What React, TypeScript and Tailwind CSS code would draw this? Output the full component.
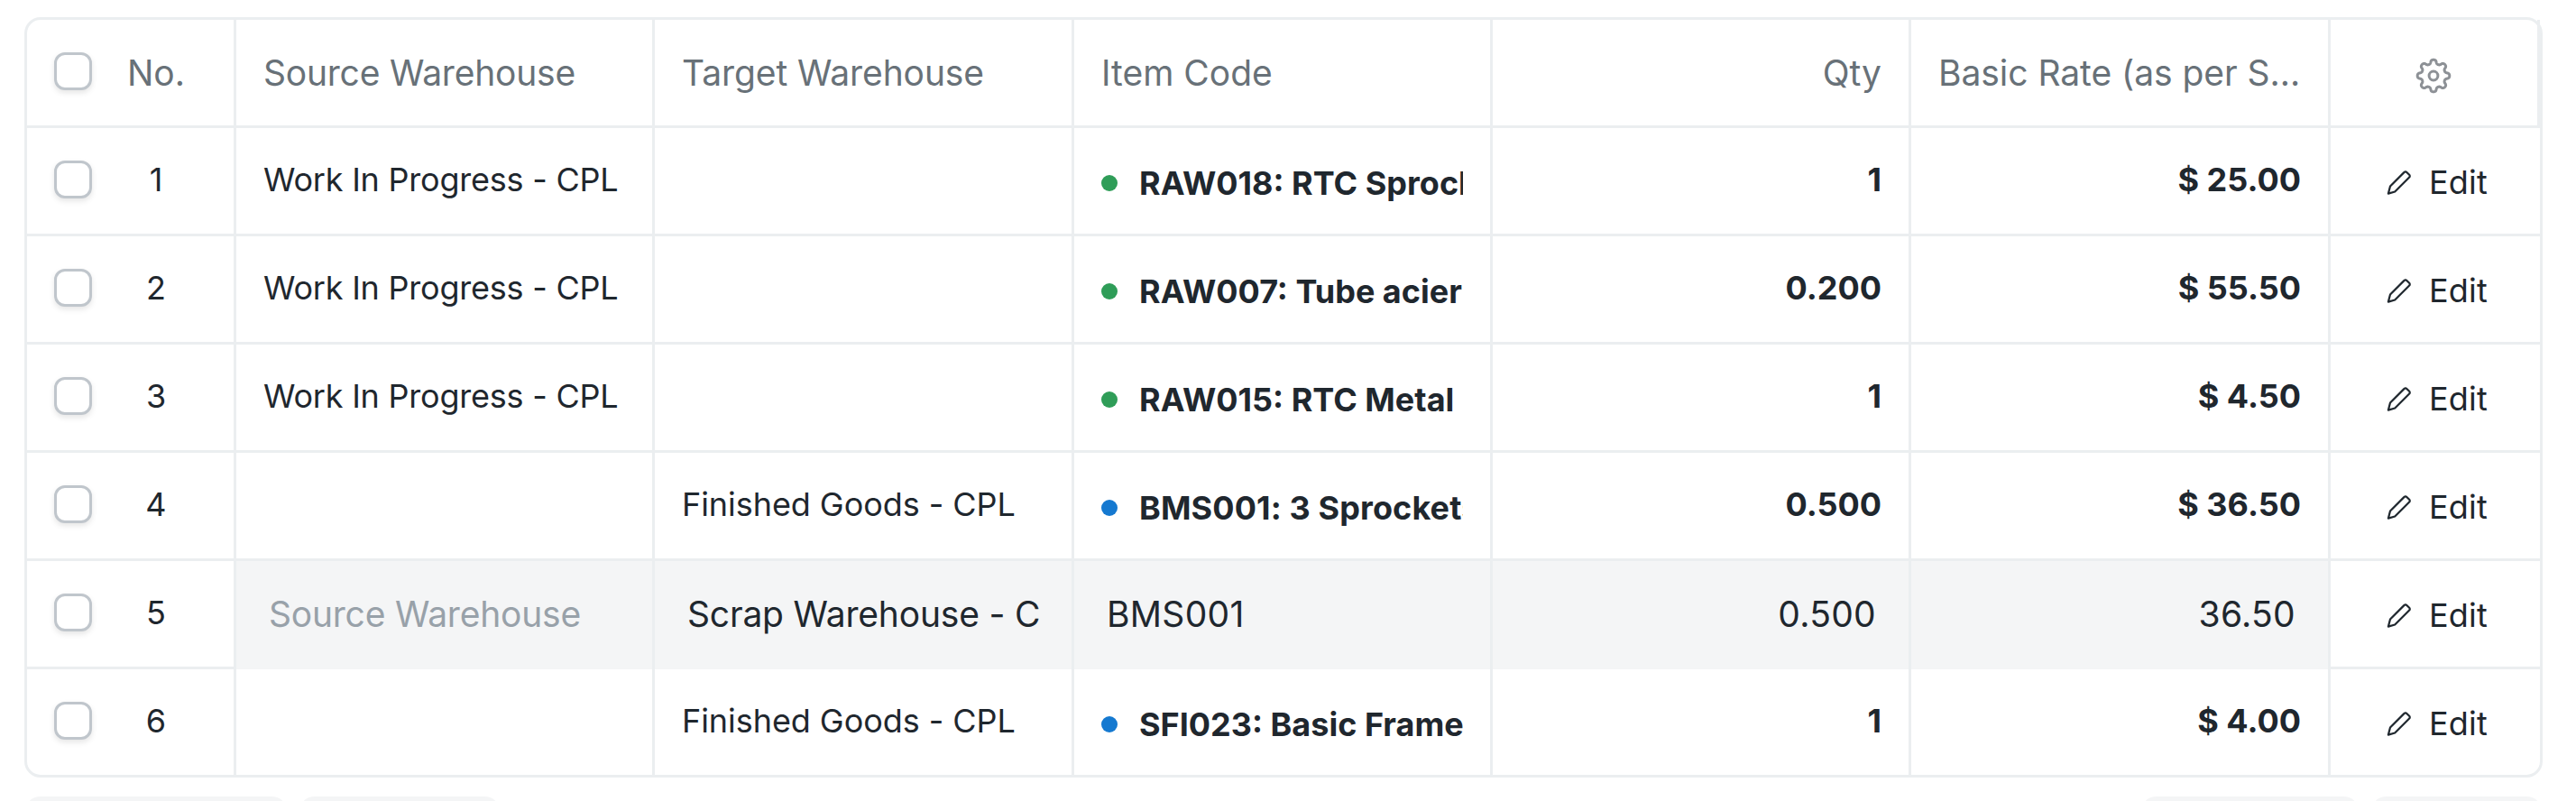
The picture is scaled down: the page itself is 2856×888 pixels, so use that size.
import React from "react";
import clsx from "clsx";

interface StockRow {
	idx: number;
	source: string;
	target: string;
	item: string;
	color: "green" | "blue";
	qty: string;
	rate: string;
	editing?: boolean;
}

const rows: StockRow[] = [
	{ idx: 1, source: "Work In Progress - CPL", target: "", item: "RAW018: RTC Sprocket", color: "green", qty: "1", rate: "$ 25.00" },
	{ idx: 2, source: "Work In Progress - CPL", target: "", item: "RAW007: Tube acier", color: "green", qty: "0.200", rate: "$ 55.50" },
	{ idx: 3, source: "Work In Progress - CPL", target: "", item: "RAW015: RTC Metal", color: "green", qty: "1", rate: "$ 4.50" },
	{ idx: 4, source: "", target: "Finished Goods - CPL", item: "BMS001: 3 Sprockets", color: "blue", qty: "0.500", rate: "$ 36.50" },
	{ idx: 5, source: "", target: "Scrap Warehouse - C", item: "BMS001", color: "blue", qty: "0.500", rate: "36.50", editing: true },
	{ idx: 6, source: "", target: "Finished Goods - CPL", item: "SFI023: Basic Frame", color: "blue", qty: "1", rate: "$ 4.00" },
];

const Checkbox = () => (
	<div className="size-[42px] shrink-0 rounded-[12px] border-[3px] border-[#c0c6cc] bg-white shadow-[0_3px_6px_rgba(0,0,0,0.1)]" />
);

const GearIcon = () => {
	// eight round teeth, sampled around the circle
	const points = Array.from({ length: 192 }, (_, i) => {
		const a = (i / 192) * Math.PI * 2;
		const r = 15.6 + 2.2 * Math.cos(8 * a);
		const t = a + 0.035 * Math.sin(16 * a);
		return `${(24 + r * Math.cos(t)).toFixed(2)},${(24 + r * Math.sin(t)).toFixed(2)}`;
	});
	return (
		<svg className="size-12" viewBox="0 0 48 48" fill="none" stroke="#8d9196" strokeWidth="3" strokeLinejoin="round">
			<polygon points={points.join(" ")} />
			<circle cx="24" cy="24" r="4.9" />
		</svg>
	);
};

const PencilIcon = () => (
	<svg className="size-9 shrink-0" viewBox="0 0 36 36" fill="none" stroke="#1f272e" strokeWidth="2.2" strokeLinejoin="round" strokeLinecap="round">
		<path d="M23.6 6.9a1.9 1.9 0 0 1 2.7 0l2.9 2.9a1.9 1.9 0 0 1 0 2.7L13.2 28.5L5.9 30.6L8 22.5Z" />
	</svg>
);

const Cell: React.FC<{ className?: string; children?: React.ReactNode }> = ({ className, children }) => (
	<div className={clsx("min-w-0 border-r-[3px] border-[#ebeef0]", className)}>{children}</div>
);

const HeaderRow = () => (
	<div className="grid h-[120px] grid-cols-[232px_464px_465px_464px_464px_465px_232px] border-b-[3px] border-[#ebeef0] text-[39px] leading-[58px] text-[#687178]">
		<div className="flex border-r-[3px] border-[#ebeef0] pl-[30px] pt-9">
			<Checkbox />
			<span className="-mt-[6px] w-[142px] text-center">No.</span>
		</div>
		<Cell className="px-[30px] pt-[30px] tracking-[-0.22px]">Source Warehouse</Cell>
		<Cell className="px-[30px] pt-[30px] tracking-[-0.1px]">Target Warehouse</Cell>
		<Cell className="px-[30px] pt-[30px]">Item Code</Cell>
		<Cell className="px-[30px] pt-[30px] text-right">Qty</Cell>
		<Cell className="whitespace-nowrap pl-[30px] pt-[30px] tracking-[-0.05px]">Basic Rate (as per S...</Cell>
		<div className="flex justify-center border-r-[3px] border-[#ebeef0] pr-px pt-[38px]">
			<GearIcon />
		</div>
	</div>
);

const GridRow: React.FC<{ row: StockRow; last: boolean }> = ({ row, last }) => {
	const line = !last && "border-b-[3px] border-[#ebeef0]";
	return (
		<div
			className={clsx(
				"grid grid-cols-[232px_464px_465px_464px_464px_465px_232px] text-[36px] leading-[54px] text-[#1f272e]",
				last ? "h-[117px]" : "h-[120px]"
			)}
		>
			<div className={clsx("flex border-r-[3px] border-[#ebeef0] pl-[30px] pt-9", line)}>
				<Checkbox />
				<span className="-mt-[6px] w-[142px] text-center">{row.idx}</span>
			</div>
			{row.editing ? (
				<>
					<Cell className="bg-[#f4f5f6] px-9 pt-[30px] text-[39px] leading-[58px] tracking-[-0.22px] text-[#98a1a9]">Source Warehouse</Cell>
					<Cell className="whitespace-nowrap bg-[#f4f5f6] pl-9 pt-[30px] text-[39px] leading-[58px] tracking-[-0.2px]">{row.target}</Cell>
					<Cell className="bg-[#f4f5f6] px-9 pt-[30px] text-[39px] leading-[58px] tracking-[0.3px]">{row.item}</Cell>
					<Cell className="bg-[#f4f5f6] px-9 pt-[30px] text-right text-[39px] leading-[58px] tracking-[0.3px]">{row.qty}</Cell>
					<Cell className="bg-[#f4f5f6] px-9 pt-[30px] text-right text-[39px] leading-[58px] tracking-[0.3px]">{row.rate}</Cell>
				</>
			) : (
				<>
					<Cell className={clsx("px-[30px] pt-[30px] tracking-[-0.22px]", line)}>{row.source}</Cell>
					<Cell className={clsx("px-[30px] pt-[30px] tracking-[-0.06px]", line)}>{row.target}</Cell>
					<Cell className={clsx("px-[30px] pt-[34px] font-bold", line)}>
						<div className="flex items-center overflow-hidden whitespace-nowrap">
							<span className={clsx("mr-6 size-[18px] shrink-0 rounded-full", row.color === "green" ? "bg-[#2f9d58]" : "bg-[#1579d0]")} />
							<span className={row.idx === 4 ? "tracking-[0.12px]" : ""}>{row.item}</span>
						</div>
					</Cell>
					<Cell className={clsx("px-[30px] pt-[30px] text-right font-bold", line)}>{row.qty}</Cell>
					<Cell className={clsx("px-[30px] pt-[30px] text-right font-bold", line)}>{row.rate}</Cell>
				</>
			)}
			<div className={clsx("flex gap-[15px] pl-[58px] pt-[33px]", line)}>
				<div className="pt-[9px]">
					<PencilIcon />
				</div>
				<span className="tracking-[0.2px]">Edit</span>
			</div>
		</div>
	);
};

export default function App() {
	return (
		<div className="h-[888px] overflow-hidden bg-white pl-[27px] pr-[37px] pt-[19px] font-['Inter',sans-serif]">
			<div className="rounded-[18px] border-[3px] border-[#ebeef0]">
				<HeaderRow />
				{rows.map((row, i) => (
					<GridRow key={row.idx} row={row} last={i === rows.length - 1} />
				))}
			</div>
			<div className="mt-[21px] flex justify-between">
				<div className="flex gap-3">
					<div className="h-[84px] w-[292px] rounded-[18px] bg-[#f4f5f6]" />
					<div className="h-[84px] w-[224px] rounded-[18px] bg-[#f4f5f6]" />
				</div>
				<div className="flex gap-3">
					<div className="h-[84px] w-[243px] rounded-[18px] bg-[#f4f5f6]" />
					<div className="h-[84px] w-[191px] rounded-[18px] bg-[#f4f5f6]" />
				</div>
			</div>
		</div>
	);
}
